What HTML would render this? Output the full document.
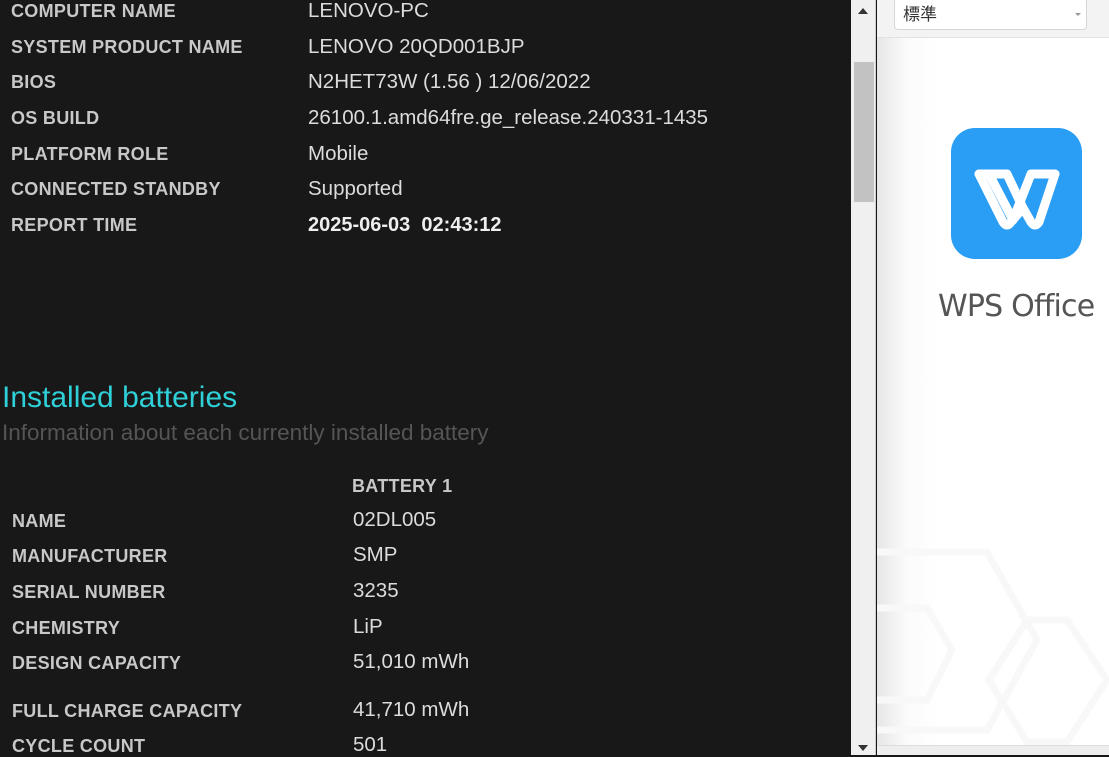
<!DOCTYPE html>
<html><head><meta charset="utf-8"><style>
*{margin:0;padding:0;box-sizing:border-box}
body{width:1109px;height:755px;overflow:hidden;background:#181818;font-family:"Liberation Sans","Noto Sans CJK JP",sans-serif;position:relative}
.l{position:absolute;color:#c8c8c8;font-weight:bold;font-size:18px;line-height:20px;letter-spacing:0.3px;white-space:nowrap}
.v{position:absolute;color:#dcdcdc;font-size:20.5px;line-height:24px;white-space:nowrap}
</style></head><body>
<div class="l" style="left:11px;top:1px">COMPUTER NAME</div><div class="v" style="left:308px;top:-1px">LENOVO-PC</div>
<div class="l" style="left:11px;top:37px">SYSTEM PRODUCT NAME</div><div class="v" style="left:308px;top:35px">LENOVO 20QD001BJP</div>
<div class="l" style="left:11px;top:72px">BIOS</div><div class="v" style="left:308px;top:70px">N2HET73W (1.56 ) 12/06/2022</div>
<div class="l" style="left:11px;top:108px">OS BUILD</div><div class="v" style="left:308px;top:106px">26100.1.amd64fre.ge_release.240331-1435</div>
<div class="l" style="left:11px;top:144px">PLATFORM ROLE</div><div class="v" style="left:308px;top:142px">Mobile</div>
<div class="l" style="left:11px;top:179px">CONNECTED STANDBY</div><div class="v" style="left:308px;top:177px">Supported</div>
<div class="l" style="left:11px;top:215px">REPORT TIME</div><div class="v" style="left:308px;top:213px;font-weight:bold;color:#eee;font-size:20px">2025-06-03&nbsp; 02:43:12</div>

<div style="position:absolute;left:2px;top:380px;color:#2fd0d8;font-size:30px;line-height:36px;white-space:nowrap">Installed batteries</div>
<div style="position:absolute;left:2px;top:420px;color:#555;font-size:22.5px;line-height:26px;white-space:nowrap">Information about each currently installed battery</div>

<div class="l" style="left:352px;top:476px">BATTERY 1</div>
<div class="l" style="left:12px;top:511px">NAME</div><div class="v" style="left:353px;top:508px">02DL005</div>
<div class="l" style="left:12px;top:546px">MANUFACTURER</div><div class="v" style="left:353px;top:543px">SMP</div>
<div class="l" style="left:12px;top:582px">SERIAL NUMBER</div><div class="v" style="left:353px;top:579px">3235</div>
<div class="l" style="left:12px;top:618px">CHEMISTRY</div><div class="v" style="left:353px;top:615px">LiP</div>
<div class="l" style="left:12px;top:653px">DESIGN CAPACITY</div><div class="v" style="left:353px;top:650px">51,010 mWh</div>
<div class="l" style="left:12px;top:701px">FULL CHARGE CAPACITY</div><div class="v" style="left:353px;top:698px">41,710 mWh</div>
<div class="l" style="left:12px;top:736px">CYCLE COUNT</div><div class="v" style="left:353px;top:733px">501</div>

<!-- scrollbar -->
<div style="position:absolute;left:851px;top:0;width:25px;height:755px;background:#f0f0f0;border-right:1px solid #ccc"></div>
<div style="position:absolute;left:858px;top:8px;width:0;height:0;border-left:5px solid transparent;border-right:5px solid transparent;border-bottom:6px solid #333"></div>
<div style="position:absolute;left:854px;top:62px;width:20px;height:140px;background:#c2c2c2"></div>
<div style="position:absolute;left:858px;top:745px;width:0;height:0;border-left:5px solid transparent;border-right:5px solid transparent;border-top:6px solid #333"></div>

<!-- right panel -->
<div style="position:absolute;left:877px;top:0;width:232px;height:755px;background:linear-gradient(to right,#e6e6e6 0,#fbfbfb 30px,#fff 60px)"></div>
<div style="position:absolute;left:877px;top:0;width:232px;height:38px;background:#f3f3f3;border-bottom:1px solid #e2e2e2"></div>
<div style="position:absolute;left:894px;top:-2px;width:193px;height:32px;background:#fff;border:1px solid #d6d6d6;border-radius:4px"></div>
<div style="position:absolute;left:903px;top:4px;font-size:17px;color:#333;line-height:22px">標準</div>
<div style="position:absolute;left:1075px;top:13px;border-left:3px solid transparent;border-right:3px solid transparent;border-top:3px solid #999"></div>
<svg style="position:absolute;left:877px;top:520px" width="232" height="235">
<g fill="none" stroke="#f8f8f8" stroke-width="7">
<path d="M0 32 H110 L160 120 L110 210 H0"/>
<path d="M0 88 H50 L75 130 L50 180 H0"/>
<path d="M150 100 H190 L230 160 L190 222 H150 L112 160 Z"/>
</g></svg>
<svg style="position:absolute;left:951px;top:128px" width="131" height="131" viewBox="0 0 131 131">
<rect width="131" height="131" rx="24" fill="#2a9df4"/>
<path d="M28 46 H56 L72 80 M104 46 H80 L62 92 L38 46" fill="none" stroke="#fff" stroke-width="9" stroke-linejoin="round" stroke-linecap="round"/>
<path d="M28 46 L52 94 Q56 100 60 94 L72 80 L80 94 Q84 100 88 94 L104 46" fill="none" stroke="#fff" stroke-width="9" stroke-linejoin="round" stroke-linecap="round"/>
</svg>
<div style="position:absolute;left:938px;top:287px;font-family:'DejaVu Sans',sans-serif;font-size:30px;color:#555;line-height:40px;letter-spacing:-0.8px;white-space:nowrap">WPS Office</div>
<div style="position:absolute;left:877px;top:745px;width:232px;height:10px;background:#eee;border-top:1px solid #ddd"></div>
</body></html>
